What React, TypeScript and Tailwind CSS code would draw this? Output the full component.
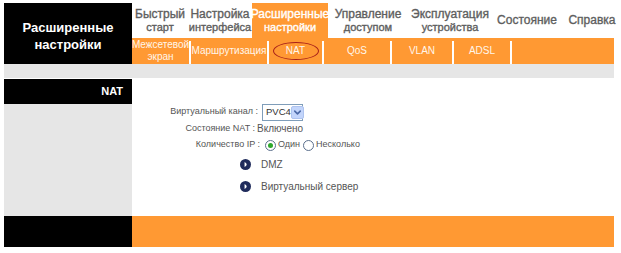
import { ChevronDown } from "lucide-react";

const navItems = [
  { top: "Быстрый", bottom: "старт", w: "w-[56px]" },
  { top: "Настройка", bottom: "интерфейса", w: "w-[64px]" },
  { top: "Расширенные", bottom: "настройки", w: "w-[76px]", active: true },
  { top: "Управление", bottom: "доступом", w: "w-[80px]" },
  { top: "Эксплуатация", bottom: "устройства", w: "w-[84px]" },
  { top: "Состояние", w: "w-[70px]" },
  { top: "Справка", w: "w-[60px]" },
];

const subTabs = [
  { label: "Межсетевой", second: "экран", w: "w-[57px]" },
  { label: "Маршрутизация", w: "w-[76px]" },
  { label: "NAT", w: "w-[53px]", marked: true },
  { label: "QoS", w: "w-[66px]" },
  { label: "VLAN", w: "w-[60px]" },
  { label: "ADSL", w: "w-[56px]" },
];

const Bullet = () => (
  <svg width="11" height="11" viewBox="0 0 12 12" className="shrink-0">
    <circle cx="6" cy="6" r="6" fill="#1f2b5b" />
    <path d="M5 3.2 Q9.6 6 5 8.8 Z" fill="#ffffff" />
  </svg>
);

const Radio = ({ checked }: { checked?: boolean }) => (
  <span className="w-[11px] h-[11px] rounded-full border border-[#5b6f8c] bg-white flex items-center justify-center shrink-0">
    {checked && <span className="w-[5px] h-[5px] rounded-full bg-[#2ea82e]" />}
  </span>
);

const App = () => {
  return (
    <div className="w-[621px] h-[253px] bg-white overflow-hidden font-['Liberation_Sans',Arial,sans-serif]">
      <div className="ml-[4px] w-[610px] pt-[3px]">
        {/* header */}
        <div className="flex h-[61px]">
          <div className="w-[128px] shrink-0 bg-black flex items-center justify-center text-center text-white font-bold text-[13px] leading-[17px] pt-[4px]">
            Расширенные
            <br />
            настройки
          </div>
          <div className="flex-1 flex flex-col min-w-0">
            <div className="flex h-[35px] overflow-visible">
              {navItems.map((item) => (
                <div
                  key={item.top}
                  className={`${item.w} shrink-0 flex flex-col items-center justify-center text-center whitespace-nowrap [-webkit-text-stroke:0.35px] ${
                    item.active ? "bg-[#ff9933] text-white" : "text-[#5e5e5e]"
                  }`}
                >
                  <span className="text-[12px] leading-[13px]">{item.top}</span>
                  {item.bottom && (
                    <span className="text-[11px] leading-[12px]">{item.bottom}</span>
                  )}
                </div>
              ))}
            </div>
            <div className="flex h-[26px] bg-[#ff9933]">
              {subTabs.map((tab) => (
                <div key={tab.label} className="flex shrink-0">
                  <div
                    className={`${tab.w} relative flex flex-col items-center justify-center text-center text-[10px] leading-[12px] text-[#fff6ea] whitespace-nowrap`}
                  >
                    <span>{tab.label}</span>
                    {tab.second && <span>{tab.second}</span>}
                    {tab.marked && (
                      <span className="absolute left-[4px] top-[4px] w-[46px] h-[18px] rounded-[50%] border-[1.5px] border-[#a8201a]" />
                    )}
                  </div>
                  <div className="w-[2px] mt-[3px] bg-white" />
                </div>
              ))}
            </div>
          </div>
        </div>

        <div className="h-[14px] bg-[#e6e6e6]" />
        <div className="h-[1px]" />

        {/* main */}
        <div className="flex h-[137px]">
          <div className="w-[128px] shrink-0 flex flex-col">
            <div className="h-[25px] bg-black text-white font-bold text-[11px] flex items-center justify-end pr-[9px]">
              NAT
            </div>
            <div className="flex-1 bg-[#e6e6e6]" />
          </div>
          <div className="flex-1 bg-white text-[#555555] pt-[24px]">
            <div className="flex items-center h-[18px]">
              <span className="w-[126px] text-right whitespace-nowrap text-[9px]">Виртуальный канал :</span>
              <div className="ml-[4px] w-[41px] h-[17px] border border-[#7f9db9] flex items-center justify-between pl-[3px] pr-[1px]">
                <span className="text-[#333333] text-[9.5px]">PVC4</span>
                <span className="w-[14px] h-[13px] rounded-[2px] bg-[#c3d5fb] border border-[#aec3ef] flex items-center justify-center">
                  <ChevronDown size={11} strokeWidth={3.5} color="#4c6aa8" />
                </span>
              </div>
            </div>
            <div className="flex items-center h-[15px]">
              <span className="w-[123px] text-right whitespace-nowrap text-[9px]">Состояние NAT :</span>
              <span className="ml-[2px] text-[10px]">Включено</span>
            </div>
            <div className="flex items-center h-[18px]">
              <span className="w-[128px] text-right whitespace-nowrap text-[9px]">Количество IP :</span>
              <div className="ml-[5px] flex items-center gap-[2px] text-[9px]">
                <Radio checked />
                <span className="mr-[1px]">Один</span>
                <Radio />
                <span>Несколько</span>
              </div>
            </div>
            <div className="flex items-center h-[21px] pl-[108px] gap-[10px] text-[10px]">
              <Bullet />
              <span>DMZ</span>
            </div>
            <div className="flex items-center h-[23px] pl-[108px] gap-[10px] text-[10px]">
              <Bullet />
              <span>Виртуальный сервер</span>
            </div>
          </div>
        </div>

        {/* footer */}
        <div className="flex h-[31px]">
          <div className="w-[128px] shrink-0 bg-black" />
          <div className="flex-1 bg-[#ff9933]" />
        </div>
      </div>
    </div>
  );
};

export default App;
